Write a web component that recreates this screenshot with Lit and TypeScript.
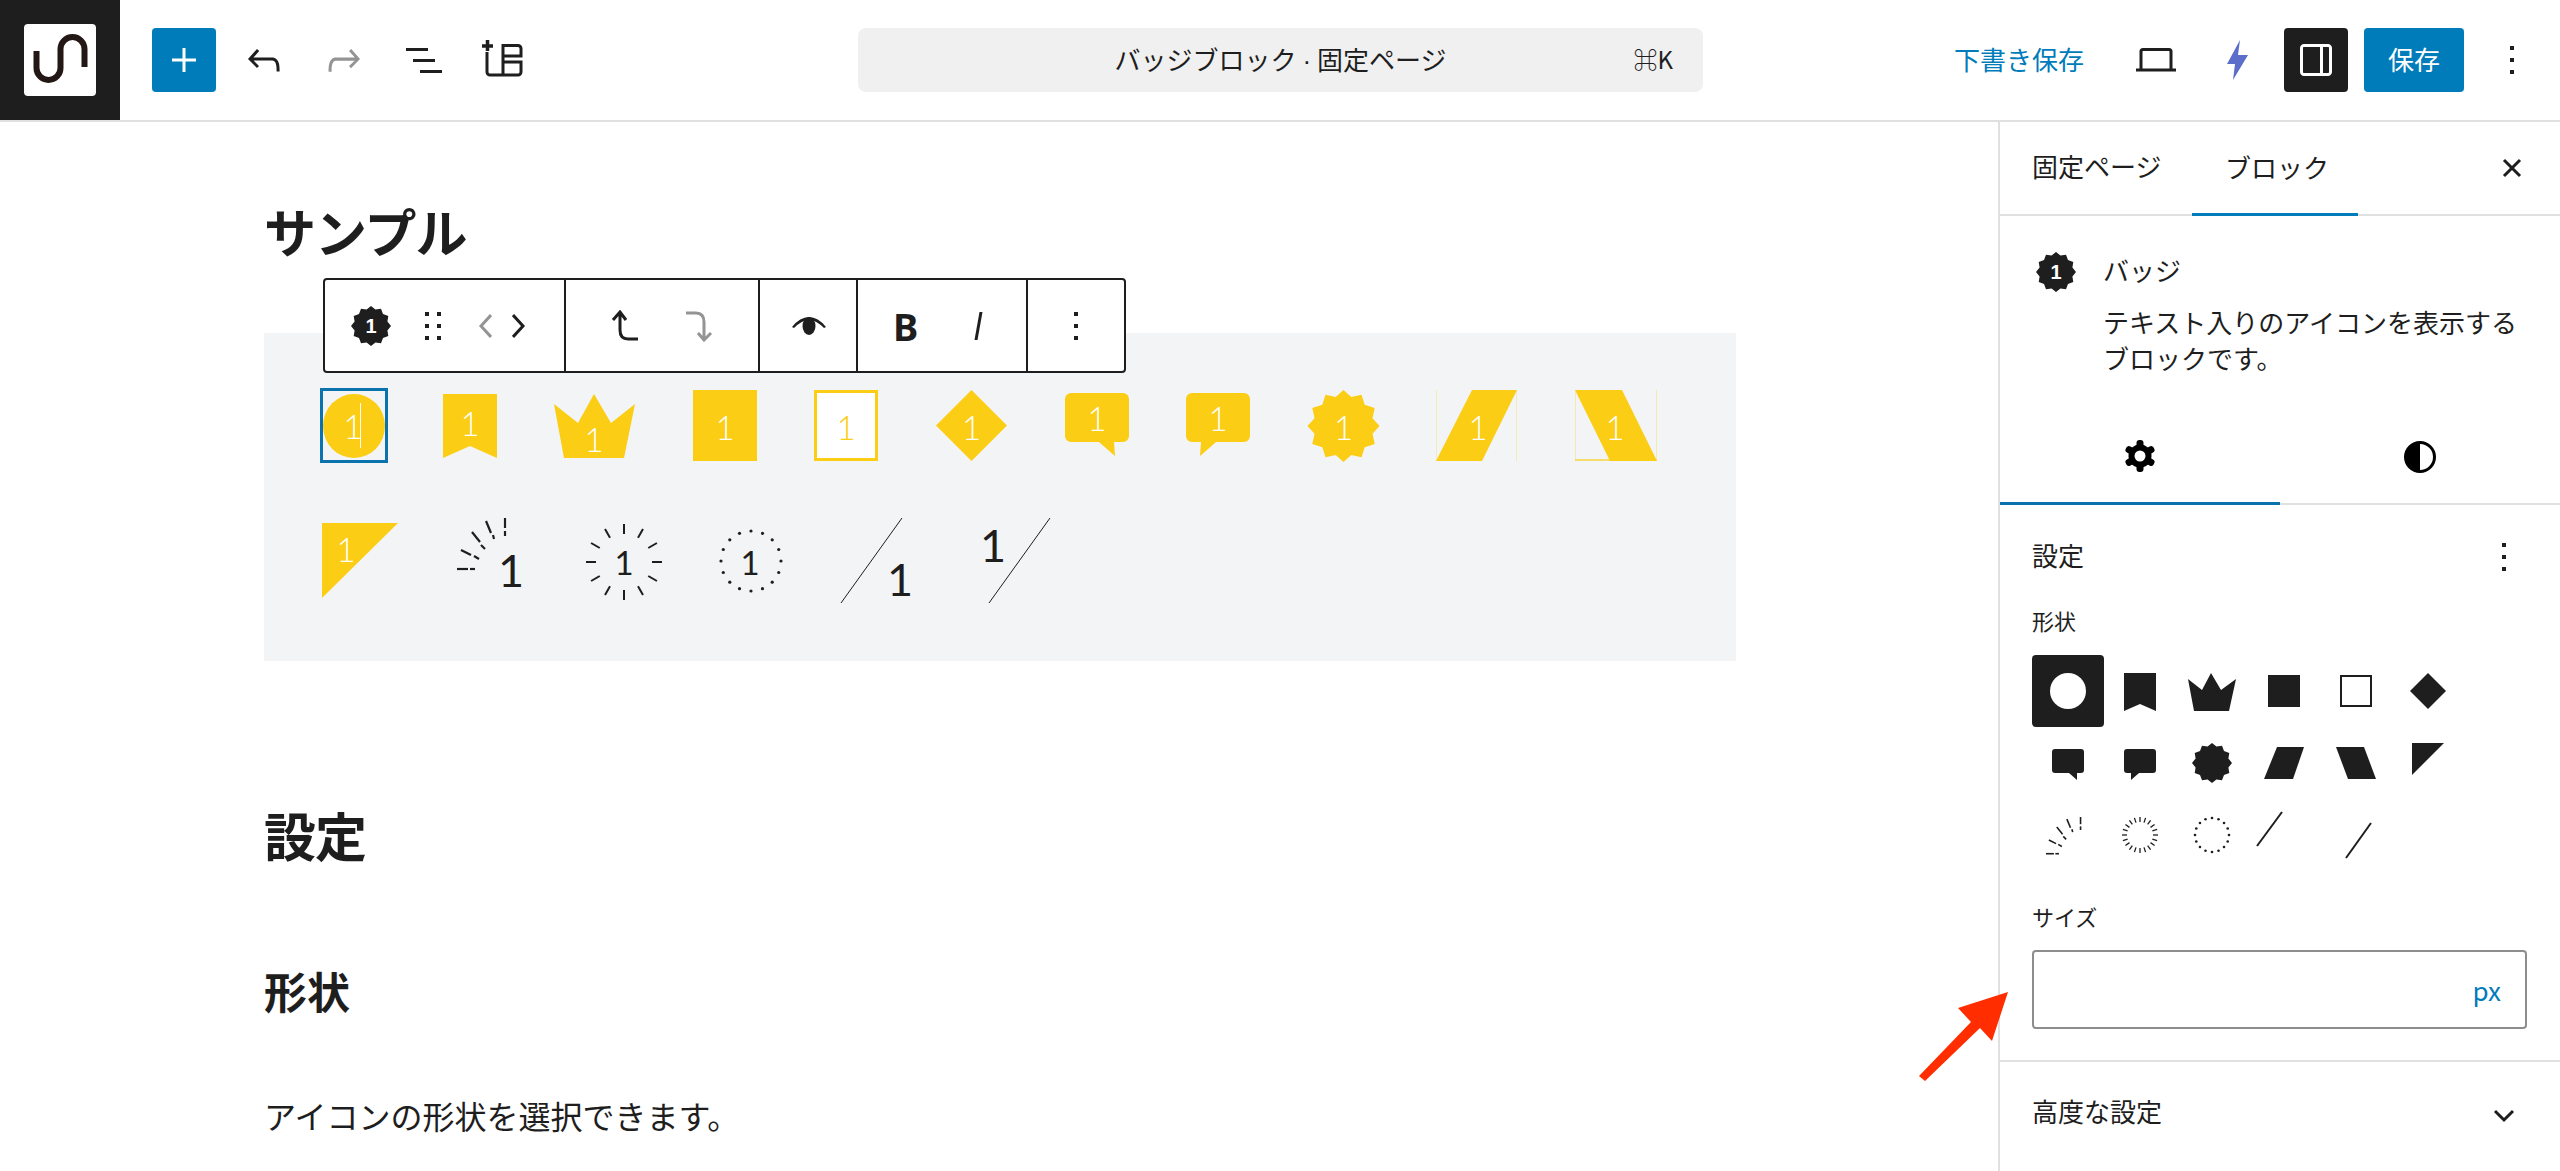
import { LitElement, html, svg, css } from "lit";
import { customElement } from "lit/decorators.js";

const Y = "#fbcd14";
const D = "#1e1e1e";

function starPts(cx: number, cy: number, R: number, r: number, n: number, ry = 1) {
  const p: string[] = [];
  for (let i = 0; i < n * 2; i++) {
    const a = (Math.PI * i) / n - Math.PI / 2;
    const q = i % 2 ? r : R;
    p.push(`${(cx + q * Math.cos(a)).toFixed(1)},${(cy + q * ry * Math.sin(a)).toFixed(1)}`);
  }
  return p.join(" ");
}

function radial(cx: number, cy: number, r0: number, r1: number, n: number, color: string, w: number) {
  const out = [];
  for (let i = 0; i < n; i++) {
    const a = (2 * Math.PI * i) / n;
    out.push(
      svg`<line x1=${cx + r0 * Math.cos(a)} y1=${cy + r0 * Math.sin(a)} x2=${cx + r1 * Math.cos(a)} y2=${cy + r1 * Math.sin(a)} stroke=${color} stroke-width=${w}/>`
    );
  }
  return out;
}

function dots(cx: number, cy: number, r: number, n: number, dr: number, color: string) {
  const out = [];
  for (let i = 0; i < n; i++) {
    const a = (2 * Math.PI * i) / n;
    out.push(svg`<circle cx=${cx + r * Math.cos(a)} cy=${cy + r * Math.sin(a)} r=${dr} fill=${color}/>`);
  }
  return out;
}

const shineSegs = [
  [0, 51, 11, 51], [13, 51, 18, 51],
  [4, 32, 14, 37], [17, 38, 22, 41],
  [15, 14, 23, 24], [24, 27, 28, 31],
  [29, 3, 34, 15], [36, 17, 37, 21],
  [48, 0, 48, 10], [48, 13, 48, 18],
];
function shine(ox: number, oy: number, s: number, w: number) {
  return shineSegs.map(
    ([a, b, c, d]) =>
      svg`<line x1=${ox + a * s} y1=${oy + b * s} x2=${ox + c * s} y2=${oy + d * s} stroke=${D} stroke-width=${w}/>`
  );
}

const num = (x: number, y: number, cls: string) => svg`<text class=${cls} x=${x} y=${y} text-anchor="middle">1</text>`;

interface Badge { w: number; body: unknown; }

const row1: Badge[] = [
  { w: 62, body: svg`<ellipse cx="31" cy="36" rx="31" ry="32" fill=${Y}/>${num(30, 49, "w")}` },
  { w: 54, body: svg`<polygon points="0,4 54,4 54,68 27,56 0,68" fill=${Y}/>${num(27, 46, "w")}` },
  { w: 81, body: svg`<polygon points="0,14 24,33 40,4 57,33 81,14 70,68 10,68" fill=${Y}/>${num(40, 62, "w")}` },
  { w: 64, body: svg`<rect y="0" width="64" height="71" fill=${Y}/>${num(32, 50, "w")}` },
  { w: 64, body: svg`<rect x="1.500" y="1.500" width="61" height="68" fill="#fff" stroke=${Y} stroke-width="3"/>${num(32, 50, "y")}` },
  { w: 71, body: svg`<polygon points="35.500,0 71,35.500 35.500,71 0,35.500" fill=${Y}/>${num(35.5, 50, "w")}` },
  { w: 64, body: svg`<path d="M6 3H58a6 6 0 0 1 6 6V46a6 6 0 0 1-6 6H49l1 14-16-14H6a6 6 0 0 1-6-6V9a6 6 0 0 1 6-6z" fill=${Y}/>${num(32, 41, "w")}` },
  { w: 64, body: svg`<path d="M6 3H58a6 6 0 0 1 6 6V46a6 6 0 0 1-6 6H30L14 66l1-14H6a6 6 0 0 1-6-6V9a6 6 0 0 1 6-6z" fill=${Y}/>${num(32, 41, "w")}` },
  { w: 71, body: svg`<polygon points=${starPts(35.5, 36, 36, 30, 12)} fill=${Y}/>${num(35.5, 50, "w")}` },
  { w: 81, body: svg`<polygon points="36,0 81,0 46,71 0,71" fill=${Y}/><line x1=".5" y1="0" x2=".5" y2="71" stroke=${Y} stroke-opacity=".25"/><line x1="80.500" y1="0" x2="80.500" y2="71" stroke=${Y} stroke-opacity=".25"/>${num(42, 50, "w")}` },
  { w: 82, body: svg`<polygon points="0,0 47,0 82,71 35,71" fill=${Y}/><line x1=".5" y1="0" x2=".5" y2="71" stroke=${Y} stroke-opacity=".3"/><line x1="81.500" y1="0" x2="81.500" y2="71" stroke=${Y} stroke-opacity=".3"/><line x1="0" y1="70" x2="35" y2="70" stroke=${Y} stroke-opacity=".8" stroke-width="1.500"/>${num(40, 50, "w")}` },
];

const row2: Badge[] = [
  { w: 76, body: svg`<polygon points="0,8 76,8 0,83" fill=${Y}/>${num(24, 47, "w")}` },
  { w: 70, body: svg`${shine(0, 3, 1, 2.2)}${num(54, 72, "d lg")}` },
  { w: 76, body: svg`${radial(38, 47, 28, 38, 12, D, 2)}${num(38, 60, "d")}` },
  { w: 62, body: svg`${dots(31, 46, 30, 16, 1.6, D)}${num(30, 60, "d")}` },
  { w: 61, body: svg`<line x1="61" y1="3" x2="0" y2="88" stroke=${D} stroke-width="1"/>${num(59, 81, "d lg")}` },
  { w: 61, body: svg`<line x1="61" y1="3" x2="0" y2="88" stroke=${D} stroke-width="1"/>${num(4, 47, "d lg")}` },
];

const picker = [
  svg`<ellipse cx="36" cy="36" rx="18" ry="18" fill="#fff"/>`,
  svg`<polygon points="20,18 52,18 52,56 36,49 20,56" fill=${D}/>`,
  svg`<polygon points="12,24 26,35 35,18 45,35 60,24 53,56 18,56" fill=${D}/>`,
  svg`<rect x="20" y="20" width="32" height="32" fill=${D}/>`,
  svg`<rect x="21" y="21" width="30" height="30" fill="none" stroke=${D} stroke-width="2"/>`,
  svg`<polygon points="36,18 54,36 36,54 18,36" fill=${D}/>`,
  svg`<path d="M23 22H49a3 3 0 0 1 3 3V43a3 3 0 0 1-3 3H45v7l-8-7H23a3 3 0 0 1-3-3V25a3 3 0 0 1 3-3z" fill=${D}/>`,
  svg`<path d="M23 22H49a3 3 0 0 1 3 3V43a3 3 0 0 1-3 3H35l-8 7v-7H23a3 3 0 0 1-3-3V25a3 3 0 0 1 3-3z" fill=${D}/>`,
  svg`<polygon points=${starPts(36, 36, 20, 17, 12)} fill=${D}/>`,
  svg`<polygon points="29,20 56,20 45,52 16,52" fill=${D}/>`,
  svg`<polygon points="16,20 44,20 56,52 28,52" fill=${D}/>`,
  svg`<polygon points="20,16 52,16 20,48" fill=${D}/>`,
  svg`${shine(14, 18, 0.72, 1.6)}`,
  svg`${radial(36, 36, 13, 18, 20, D, 1.3)}`,
  svg`${dots(36, 36, 17, 16, 1.3, D)}`,
  svg`<line x1="34" y1="13" x2="9" y2="47" stroke=${D} stroke-width="2"/>`,
  svg`<line x1="51" y1="24" x2="26" y2="59" stroke=${D} stroke-width="2"/>`,
];

const miniBadge = (size: number) => html`<svg class="mini" width=${size} height=${size} viewBox="0 0 40 40">
  <polygon points=${starPts(20, 20, 20, 17, 12)} fill=${D}></polygon>
  <text class="mini-t" x="20" y="27" text-anchor="middle">1</text>
</svg>`;

const moreV = html`<svg class="mv" width="48" height="48" viewBox="0 0 24 24" fill="#1e1e1e"><path d="M13 19h-2v-2h2v2zm0-6h-2v-2h2v2zm0-6h-2V5h2v2z"></path></svg>`;

const gearLobes = [0, 60, 120, 180, 240, 300];

@customElement("app-root")
export class AppRoot extends LitElement {
  static styles = css`
    :host { display: block; width: 2560px; height: 1171px; overflow: hidden; position: relative; background: #fff;
      font-family: "Noto Sans CJK JP", "Noto Sans", sans-serif; color: #1e1e1e; font-size: 26px; }
    * { box-sizing: border-box; }
    svg { display: block; flex: none; }
    .top { height: 122px; display: flex; align-items: center; border-bottom: 2px solid #e0e0e0; }
    .logo { width: 120px; height: 120px; background: #1e1e1e; display: flex; align-items: center; justify-content: center; flex: none; }
    .logo-in { width: 72px; height: 72px; background: #fff; border-radius: 4px; display: flex; align-items: center; justify-content: center; }
    .tools { display: flex; align-items: center; margin-left: 32px; }
    .plus { width: 64px; height: 64px; background: #007cba; border-radius: 4px; display: flex; align-items: center; justify-content: center; }
    .ic { width: 48px; height: 48px; margin-left: 32px; }
    .plus + .ic { margin-left: 24px; }
    .ic svg { width: 48px; height: 48px; }
    .title { margin-left: 330px; width: 845px; height: 64px; padding-bottom: 3px; background: #f0f0f0; border-radius: 8px; display: grid; grid-template-columns: 1fr auto 1fr; align-items: center; }
    .title-t { grid-column: 2; }
    .dot { font-family: "Liberation Sans", sans-serif; }
    .kbd { grid-column: 3; justify-self: end; padding-right: 30px; font-size: 24px; }
    .right { margin-left: auto; display: flex; align-items: center; }
    .draft { color: #007cba; font-size: 26px; margin-right: 52px; padding-bottom: 3px; }
    .act { width: 64px; height: 64px; border-radius: 4px; display: flex; align-items: center; justify-content: center; }
    .act.on { background: #1e1e1e; margin-left: 36px; }
    .bolt { margin-left: 49px; }
    .save { width: 100px; height: 64px; padding-bottom: 3px; background: #007cba; border-radius: 4px; color: #fff; display: flex; align-items: center; justify-content: center; margin-left: 16px; }
    .more { width: 64px; display: flex; justify-content: center; margin: 0 16px; }
    .wrap { display: flex; height: 1049px; }
    .main { flex: 1; min-width: 0; overflow: hidden; }
    .col { width: 1472px; margin-left: 264px; padding-top: 72px; }
    h2 { margin: 0; font-weight: 700; font-size: 52px; line-height: 74px; letter-spacing: -1px; }
    .block { position: relative; height: 328px; margin-top: 65px; background: #f3f4f6; padding: 57px 0 0 59px; }
    .row { display: flex; align-items: flex-start; gap: 57.6px; height: 72px; }
    .row2 { height: 90px; gap: 58.8px; margin-top: 53px; margin-left: -1px; }
    .row2 > :last-child { margin-left: 28px; }
    .bs { overflow: visible; }
    .b text { font-family: "Lato", "Noto Sans", sans-serif; font-weight: 400; font-size: 33px; }
    .b text.w, .b text.y { font-weight: 300; }
    .w { fill: #fff; } .y { fill: #fbcd14; } .d { fill: #1e1e1e; }
    .b text.lg { font-size: 45px; }
    .sel { position: absolute; left: 56px; top: 55px; width: 68px; height: 75px; border: 3px solid #0a72ad; pointer-events: none; }
    .caret { position: absolute; left: 96px; top: 70px; width: 1px; height: 45px; background: #fff; }
    .tb { position: absolute; left: 59px; top: -55px; width: 803px; height: 95px; background: #fff; border: 2px solid #1e1e1e; border-radius: 4px; display: flex; }
    .seg { border-right: 2px solid #1e1e1e; height: 100%; display: flex; align-items: center; flex: none; }
    .seg:last-child { border-right: 0; flex: 1; justify-content: center; }
    .s1 { width: 241px; padding-left: 26px; }
    .s2 { width: 194px; padding-left: 45px; }
    .s3 { width: 98px; padding-left: 31px; }
    .s4 { width: 170px; padding-left: 35px; }
    .drag { margin-left: 18px; }
    .chl { margin-left: 21px; }
    .chr { margin-left: 20px; }
    .dn { margin-left: 46px; }
    .ital { margin-left: 56px; }
    .mini-t { font-family: "Liberation Sans", sans-serif; font-weight: 700; font-size: 20px; fill: #fff; }
    .B { font-family: "Noto Sans", sans-serif; font-weight: 700; font-size: 38px; line-height: 1; }
    h3 { margin: 0; font-weight: 700; font-size: 52px; line-height: 74px; }
    .h-set { margin-top: 137px; letter-spacing: -1px; }
    .h-shape { margin-top: 88px; font-size: 43px; line-height: 60px; }
    p { margin: 71px 0 0; font-size: 32px; line-height: 48px; }
    .side { width: 562px; flex: none; border-left: 2px solid #e0e0e0; display: flex; flex-direction: column; }
    .tabs { height: 94px; flex: none; display: flex; align-items: flex-start; border-bottom: 2px solid #e0e0e0; padding-left: 32px; }
    .tab { display: flex; align-items: center; height: 92px; padding-bottom: 6px; }
    .tab.t1 { width: 130px; }
    .tab.t2 { margin-left: 30px; padding: 0 29px 3px 33px; height: 94px; border-bottom: 3px solid #007cba; width: 166px; }
    .tab-x { margin-left: auto; margin-right: 38px; padding-bottom: 0; }
    .info { height: 193px; flex: none; padding: 36px 32px 0 36px; display: flex; gap: 27px; }
    .info-t { width: 420px; line-height: 36px; }
    .info-n { margin-bottom: 16px; }
    .st { height: 96px; flex: none; display: flex; border-bottom: 2px solid #e0e0e0; }
    .st-i { flex: 1; display: flex; align-items: center; justify-content: center; height: 96px; }
    .st-i.on { border-bottom: 3px solid #0a72ad; }
    .panel { padding: 0 33px 0 32px; flex: none; }
    .ph { display: flex; align-items: center; justify-content: space-between; height: 48px; margin: 25px -1px 0 0; }
    .ph .mv { margin-top: 6px; }
    .lab { font-size: 22px; line-height: 32px; margin-top: 26px; }
    .grid { display: grid; grid-template-columns: repeat(6, 72px); grid-auto-rows: 72px; margin-top: 19px; }
    .cell { width: 72px; height: 72px; border-radius: 4px; overflow: visible; }
    .cell.on { background: #1e1e1e; }
    .lab2 { margin-top: 29px; }
    .input { height: 79px; margin-top: 18px; border: 2px solid #8d8d8d; border-radius: 4px; display: flex; align-items: center; justify-content: flex-end; padding-right: 24px; color: #007cba; font-size: 26px; }
    .adv { flex: 1; border-top: 2px solid #e0e0e0; margin-top: 31px; padding: 0 45px 12px 32px; display: flex; align-items: center; justify-content: space-between; }
    .adv svg { margin-top: 10px; }
    .arrow { position: absolute; left: 1910px; top: 985px; }
  `;

  render() {
    return html`
      <div class="top">
        <div class="logo"><div class="logo-in">
          <svg width="56" height="56" viewBox="0 0 56 56" fill="none" stroke="#231815" stroke-width="6">
            <path d="M4.500 19V36a12 12 0 0 0 24 0V17a12 12 0 0 1 24 0V35"></path>
          </svg>
        </div></div>
        <div class="tools">
          <div class="plus"><svg width="32" height="32" viewBox="0 0 32 32" fill="none" stroke="#fff" stroke-width="3"><path d="M16 4V28M4 16H28"></path></svg></div>
          <div class="ic"><svg viewBox="0 0 24 24" fill="#1e1e1e"><path d="M18.300 11.700c-.6-.6-1.400-.9-2.300-.9H6.700l2.900-3.300-1.100-1-4.500 5L8.500 16l1-1-2.700-2.700H16c.5 0 .9.200 1.300.500 1 1 1 3.400 1 4.500v.5h1.500v-.5c0-1.500 0-4.300-1.500-5.700z"></path></svg></div>
          <div class="ic"><svg viewBox="0 0 24 24" fill="#949494"><path d="M15.600 6.500l-1.100 1 2.900 3.300H8c-.9 0-1.700.3-2.300.9-1.400 1.500-1.400 4.200-1.400 5.700v.5h1.500v-.5c0-1 0-3.500 1-4.500.3-.3.7-.5 1.300-.5h9.200L14.500 15l1 1.100 4.500-4.600-4.400-5z"></path></svg></div>
          <div class="ic"><svg viewBox="0 0 24 24" fill="#1e1e1e"><path d="M3 6h11v1.500H3V6zm3.500 5.500h11V13h-11v-1.500zM21 17H10v1.500h11V17z"></path></svg></div>
          <div class="ic"><svg viewBox="0 0 48 48" fill="none" stroke="#1e1e1e" stroke-width="3"><path d="M2 10H13M7.500 4V15" stroke-width="3.500"></path><path d="M7 16V36a3 3 0 0 0 3 3H23V8M23 9.500H38a3 3 0 0 1 3 3V20H23M23 26H41V36a3 3 0 0 1-3 3H23"></path></svg></div>
        </div>
        <div class="title"><span class="title-t">バッジブロック <span class="dot">·</span> 固定ページ</span><span class="kbd">⌘K</span></div>
        <div class="right">
          <span class="draft">下書き保存</span>
          <svg width="40" height="24" viewBox="0 0 40 24" fill="none" stroke="#1e1e1e" stroke-width="3"><path d="M5 21V3.500a2 2 0 0 1 2-2H33a2 2 0 0 1 2 2V21M0 22H40"></path></svg>
          <svg class="bolt" width="23" height="40" viewBox="0 0 23 40"><polygon points="15,0 2,24 10,24 8,40 23,15 13,15" fill="#5b6ec9"></polygon></svg>
          <div class="act on"><svg width="48" height="48" viewBox="0 0 24 24" fill="#fff"><path d="M18 4H6c-1.100 0-2 .9-2 2v12c0 1.100.9 2 2 2h12c1.100 0 2-.9 2-2V6c0-1.100-.9-2-2-2zm-4 14.500H6c-.3 0-.5-.2-.5-.5V6c0-.3.2-.5.5-.5h8v13zm4.500-.5c0 .3-.2.5-.5.5h-2.500v-13H18c.3 0 .5.2.5.5v12z"></path></svg></div>
          <div class="save">保存</div>
          <div class="more">${moreV}</div>
        </div>
      </div>
      <div class="wrap">
        <div class="main"><div class="col">
          <h2>サンプル</h2>
          <div class="block">
            <div class="row">${row1.map((b) => html`<svg class="b bs" width=${b.w} height="72" viewBox="0 0 ${b.w} 72">${b.body}</svg>`)}</div>
            <div class="row row2">${row2.map((b) => html`<svg class="b bs" width=${b.w} height="90" viewBox="0 0 ${b.w} 90">${b.body}</svg>`)}</div>
            <div class="sel"></div><div class="caret"></div>
            <div class="tb">
              <div class="seg s1">${miniBadge(40)}
                <svg class="drag" width="48" height="48" viewBox="0 0 24 24" fill="#1e1e1e"><path d="M8 7h2V5H8v2zm0 6h2v-2H8v2zm0 6h2v-2H8v2zm6-14v2h2V5h-2zm0 8h2v-2h-2v2zm0 6h2v-2h-2v2z"></path></svg>
                <svg class="chl" width="14" height="28" viewBox="0 0 14 28" fill="none" stroke="#949494" stroke-width="3"><path d="M13 3 3 14 13 25"></path></svg>
                <svg class="chr" width="14" height="28" viewBox="0 0 14 28" fill="none" stroke="#1e1e1e" stroke-width="3"><path d="M1 3 11 14 1 25"></path></svg>
              </div>
              <div class="seg s2">
                <svg width="28" height="32" viewBox="0 0 28 32" fill="none" stroke="#1e1e1e" stroke-width="3"><path d="M2 10 9 2 15 10M9 2V20Q9 29 17 29H27"></path></svg>
                <svg class="dn" width="28" height="32" viewBox="0 0 28 32" fill="none" stroke="#949494" stroke-width="3"><path d="M1 3H11Q19 3 19 12V30M13 23 19 30 26 23"></path></svg>
              </div>
              <div class="seg s3">
                <svg width="36" height="20" viewBox="0 0 36 20" fill="#1e1e1e"><path d="M1 11Q9 1 18 1T35 11L33 12Q25 4 18 4T3 12z"></path><ellipse cx="18" cy="10" rx="6.500" ry="9"></ellipse></svg>
              </div>
              <div class="seg s4">
                <span class="B">B</span>
                <svg class="ital" width="10" height="30" viewBox="0 0 10 30" fill="#1e1e1e"><polygon points="5.500,1 8.500,1 3.500,29 .5,29"></polygon></svg>
              </div>
              <div class="seg">${moreV}</div>
            </div>
          </div>
          <h3 class="h-set">設定</h3>
          <h3 class="h-shape">形状</h3>
          <p>アイコンの形状を選択できます。</p>
        </div></div>
        <aside class="side">
          <div class="tabs">
            <div class="tab t1">固定ページ</div>
            <div class="tab t2">ブロック</div>
            <div class="tab tab-x"><svg width="20" height="20" viewBox="0 0 20 20" fill="none" stroke="#1e1e1e" stroke-width="3"><path d="M2 2 18 18M18 2 2 18"></path></svg></div>
          </div>
          <div class="info">${miniBadge(40)}
            <div class="info-t"><div class="info-n">バッジ</div><div>テキスト入りのアイコンを表示するブロックです。</div></div>
          </div>
          <div class="st">
            <div class="st-i on"><svg width="32" height="32" viewBox="0 0 32 32">
              ${gearLobes.map((a) => svg`<rect x="12.500" y="0" width="7" height="9" rx="3" transform="rotate(${a} 16 16)"></rect>`)}
              <circle cx="16" cy="16" r="11.500"></circle><circle cx="16" cy="16" r="5.500" fill="#fff"></circle>
            </svg></div>
            <div class="st-i"><svg width="32" height="32" viewBox="0 0 32 32"><circle cx="16" cy="16" r="14.500" fill="#fff" stroke="#000" stroke-width="3"></circle><path d="M16 1A15 15 0 0 0 16 31z"></path></svg></div>
          </div>
          <div class="panel">
            <div class="ph">設定${moreV}</div>
            <div class="lab">形状</div>
            <div class="grid">${picker.map((s, i) => html`<svg class="cell ${i === 0 ? "on" : ""}" viewBox="0 0 72 72">${s}</svg>`)}</div>
            <div class="lab lab2">サイズ</div>
            <div class="input">px</div>
          </div>
          <div class="adv">高度な設定<svg width="22" height="14" viewBox="0 0 22 14" fill="none" stroke="#1e1e1e" stroke-width="3"><path d="M2 2 11 11 20 2"></path></svg></div>
        </aside>
      </div>
      <svg class="arrow" width="100" height="100" viewBox="0 0 100 100"><polygon points="98,7 82,56 70,43 15,96 9,91 61,37 48,23" fill="#ff2d00"></polygon></svg>
    `;
  }
}
